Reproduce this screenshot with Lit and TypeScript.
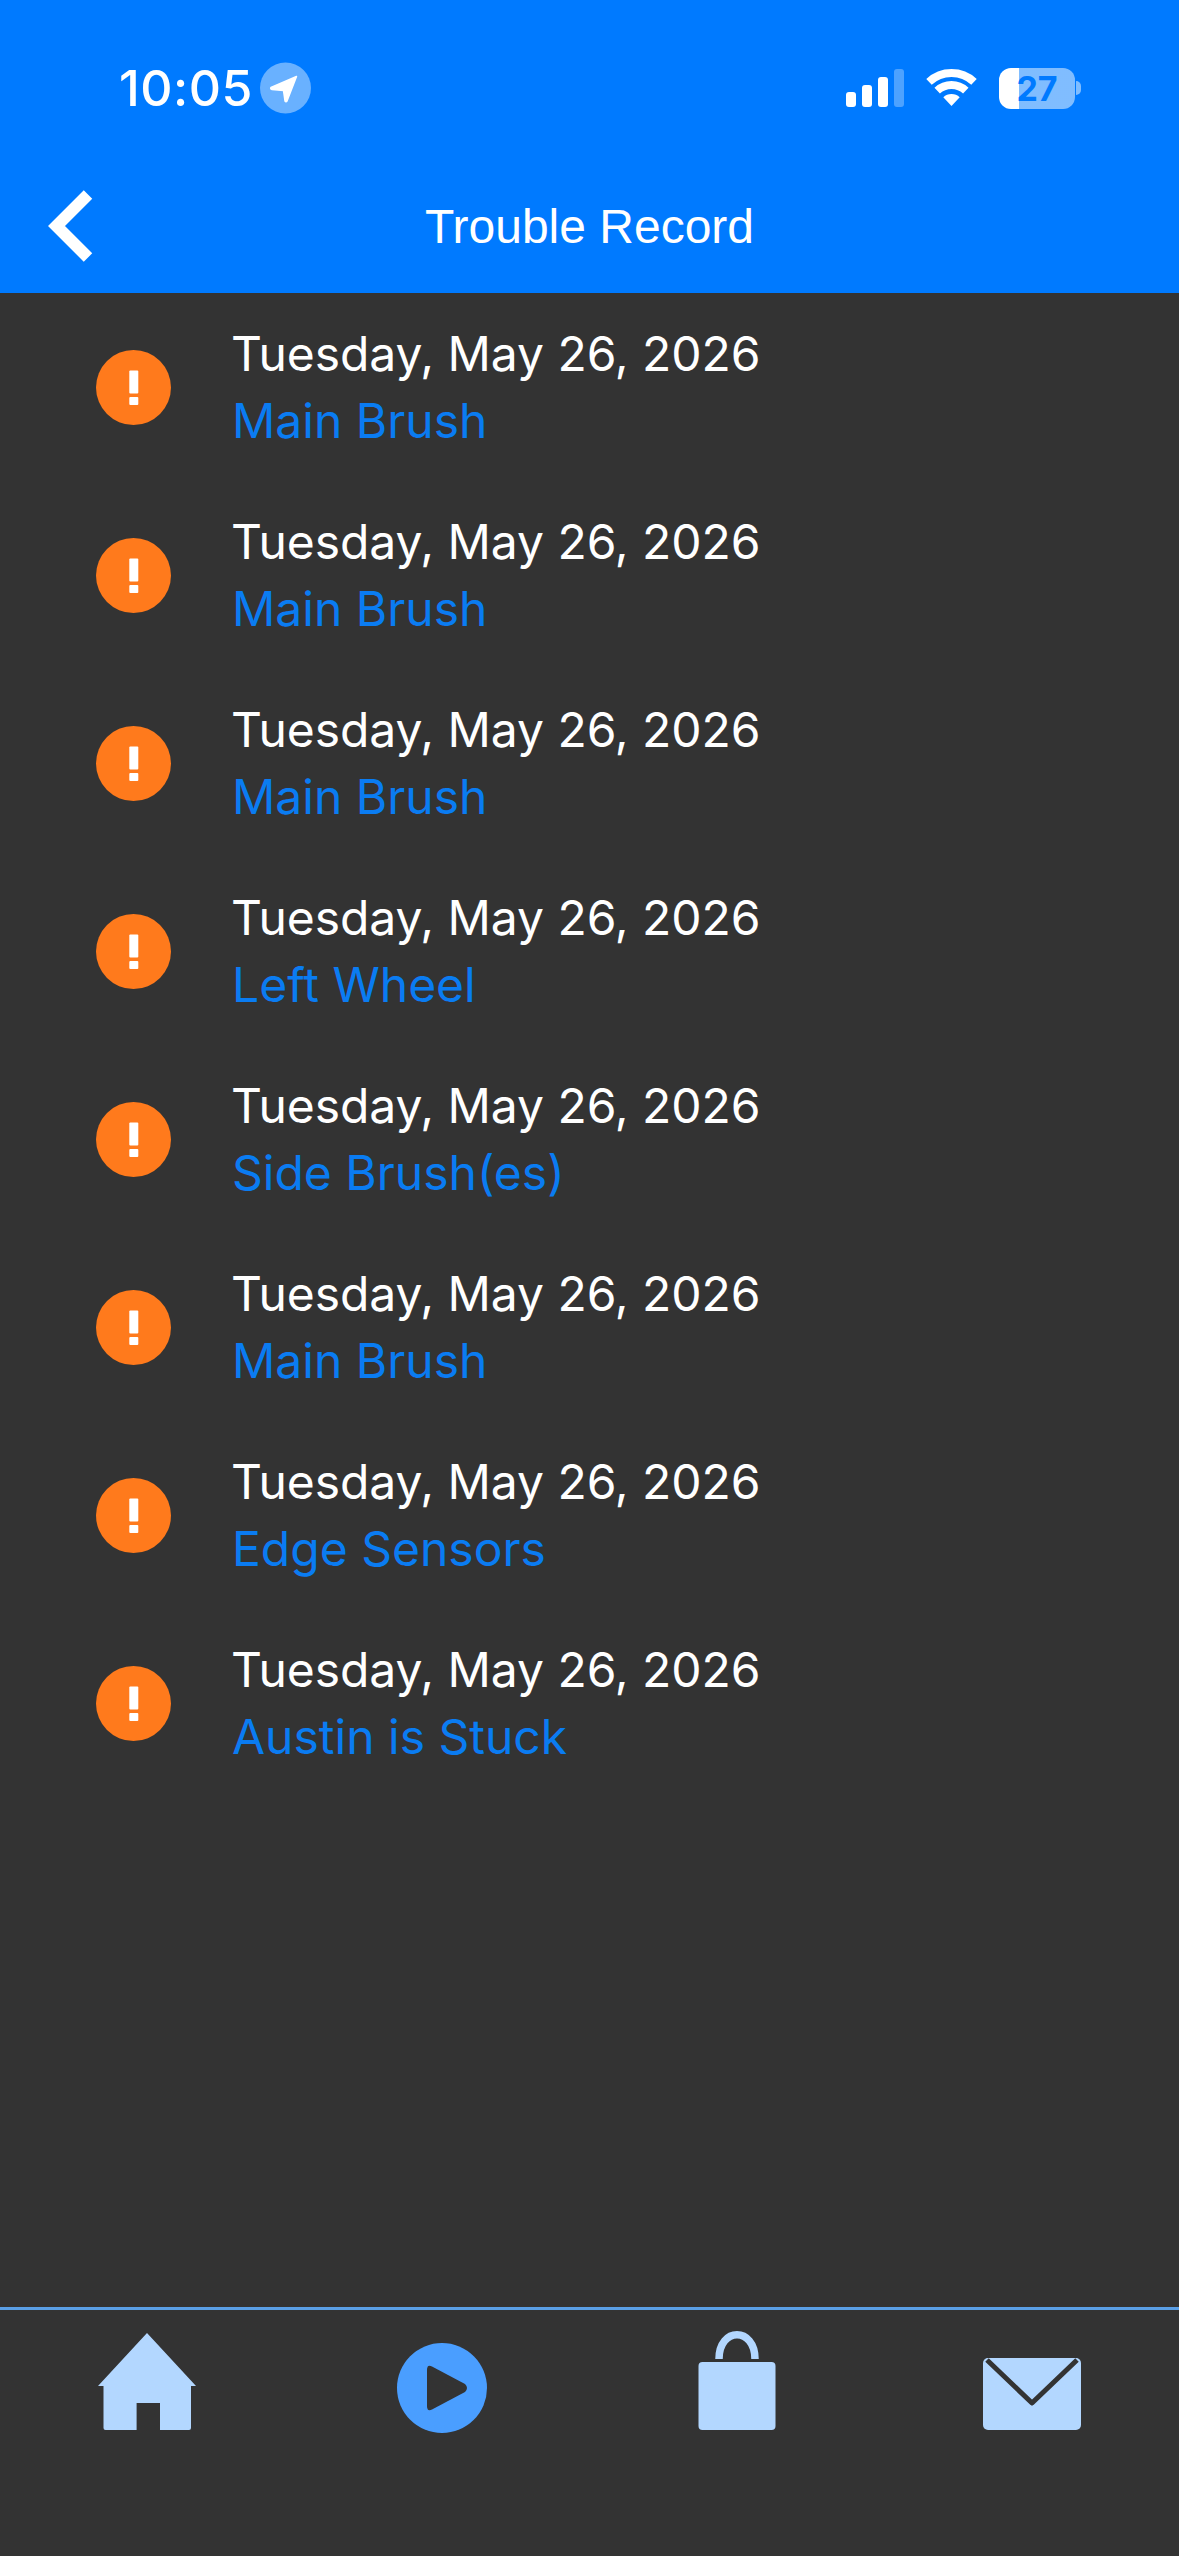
import { LitElement, html, css } from "lit";
import { customElement } from "lit/decorators.js";

const ITEMS = ["Main Brush","Main Brush","Main Brush","Left Wheel","Side Brush(es)","Main Brush","Edge Sensors","Austin is Stuck"];

@customElement("app-root")
export class AppRoot extends LitElement {
  static styles = css`
    :host { display: flex; flex-direction: column; width: 1179px; height: 2556px; background: #333333; font-family: Inter, "Noto Sans", sans-serif; overflow: hidden; }
    .header { background: #007aff; height: 293px; flex: none; display: flex; flex-direction: column; color: #fff; }
    .status { height: 176px; flex: none; display: flex; align-items: center; justify-content: space-between; padding: 0 98px 0 119px; box-sizing: border-box; }
    .left { display: flex; align-items: center; gap: 7px; }
    .time { font-size: 50px; font-weight: 500; line-height: 52px; letter-spacing: 0.5px; }
    .right { display: flex; align-items: center; gap: 22px; }
    .batt { display: flex; align-items: center; }
    .batt-body { width: 76px; height: 41px; border-radius: 12px; background: linear-gradient(90deg, #fff 0 20px, rgba(255,255,255,.5) 20px); color: #007aff; font-size: 34px; font-weight: 700; line-height: 41px; text-align: center; }
    .batt-tip { width: 5px; height: 14px; margin-left: 1px; border-radius: 0 7px 7px 0; background: rgba(255,255,255,.5); }
    .title-row { height: 98px; flex: none; display: grid; grid-template-columns: 1fr auto 1fr; align-items: center; }
    .back { margin-left: 44px; display: block; }
    .title { font-family: "Liberation Sans", Arial, sans-serif; font-size: 48px; line-height: 98px; padding-top: 2px; }
    .list { flex: 1; display: flex; flex-direction: column; }
    .row { height: 188px; flex: none; display: flex; align-items: center; padding-left: 96px; gap: 61px; }
    .row svg { flex: none; }
    .text { display: flex; flex-direction: column; }
    .date { font-size: 48px; line-height: 67px; color: #fff; margin-left: -1px; letter-spacing: -0.05px; }
    .sub { font-size: 48px; line-height: 67px; color: #0a7cf2; }
    .nav { height: 249px; flex: none; box-sizing: border-box; border-top: 3px solid #5a9fe6; display: grid; grid-template-columns: repeat(4, 1fr); }
    .tab { display: flex; justify-content: center; align-items: flex-start; }
    .home { padding-top: 23px; }
    .play { padding-top: 33px; }
    .bag { padding-top: 21px; }
    .mail { padding-top: 48px; }
  `;

  private alert() {
    return html`<svg width="75" height="75" viewBox="0 0 75 75">
      <circle cx="37.5" cy="37.5" r="37.5" fill="#ff7a1c"/>
      <rect x="33.3" y="20.5" width="9" height="23" rx="1" fill="#fff"/>
      <rect x="33.3" y="47" width="9" height="8" rx="1" fill="#fff"/>
    </svg>`;
  }

  render() {
    return html`
      <div class="header">
        <div class="status">
          <div class="left">
            <span class="time">10:05</span>
            <svg width="51" height="52" viewBox="0 0 51 52">
              <circle cx="25.5" cy="26" r="25.5" fill="#69b1ff"/>
              <path d="M36.500 14.500 L11 25.500 Q10 27 12 27.500 L23.500 28.500 L25 39 Q26 40.500 27 39 Z" fill="#fff" stroke="#fff" stroke-width="1.500" stroke-linejoin="round"/>
            </svg>
          </div>
          <div class="right">
            <svg width="58" height="38" viewBox="0 0 58 38">
              <rect x="0" y="23" width="10" height="15" rx="3" fill="#fff"/>
              <rect x="16" y="16" width="10" height="22" rx="3" fill="#fff"/>
              <rect x="32" y="8" width="10" height="30" rx="3" fill="#fff"/>
              <rect x="48" y="0" width="10" height="38" rx="3" fill="#fff" fill-opacity=".3"/>
            </svg>
            <svg width="51" height="38" viewBox="0 0 51 38">
              <path d="M3 12.900 A33 33 0 0 1 48 12.900" fill="none" stroke="#fff" stroke-width="8"/>
              <path d="M11.200 21.600 A21 21 0 0 1 39.800 21.600" fill="none" stroke="#fff" stroke-width="8"/>
              <path d="M17.300 28.200 A12 12 0 0 1 33.700 28.200 L25.500 37 Z" fill="#fff"/>
            </svg>
            <div class="batt">
              <div class="batt-body">27</div>
              <div class="batt-tip"></div>
            </div>
          </div>
        </div>
        <div class="title-row">
          <svg class="back" width="52" height="72" viewBox="0 0 52 72">
            <path d="M44 4.500 L12.500 36 L44 67.500" fill="none" stroke="#fff" stroke-width="12"/>
          </svg>
          <div class="title">Trouble Record</div>
          <div></div>
        </div>
      </div>
      <div class="list">
        ${ITEMS.map((t) => html`
          <div class="row">
            ${this.alert()}
            <div class="text">
              <div class="date">Tuesday, May 26, 2026</div>
              <div class="sub">${t}</div>
            </div>
          </div>`)}
      </div>
      <div class="nav">
        <div class="tab home">
          <svg width="98" height="100" viewBox="0 0 98 100">
            <path d="M49 0 L98 53 L93 53 L93 95 Q93 97 91 97 L62 97 L62 70 L38.600 70 L38.600 97 L7.500 97 Q5.500 97 5.500 95 L5.500 53 L0 53 Z" fill="#b3d7ff"/>
          </svg>
        </div>
        <div class="tab play">
          <svg width="90" height="90" viewBox="0 0 90 90">
            <circle cx="45" cy="45" r="45" fill="#4a9eff"/>
            <path d="M30 27 Q30 21 35 23.500 L68 41 Q72 45 68 49 L35 66.500 Q30 69 30 63 Z" fill="#333"/>
          </svg>
        </div>
        <div class="tab bag">
          <svg width="78" height="100" viewBox="0 0 78 100">
            <path d="M21 28 C21 -4.300 57 -4.300 57 28" fill="none" stroke="#b3d7ff" stroke-width="7.500"/>
            <rect x="0.500" y="31" width="77" height="68" rx="4" fill="#b3d7ff"/>
          </svg>
        </div>
        <div class="tab mail">
          <svg width="98" height="72" viewBox="0 0 98 72">
            <rect x="0" y="0" width="98" height="72" rx="5" fill="#b3d7ff"/>
            <path d="M4 2 L49 45 L94 2" fill="none" stroke="#333" stroke-width="5" stroke-linejoin="round"/>
          </svg>
        </div>
      </div>
    `;
  }
}
